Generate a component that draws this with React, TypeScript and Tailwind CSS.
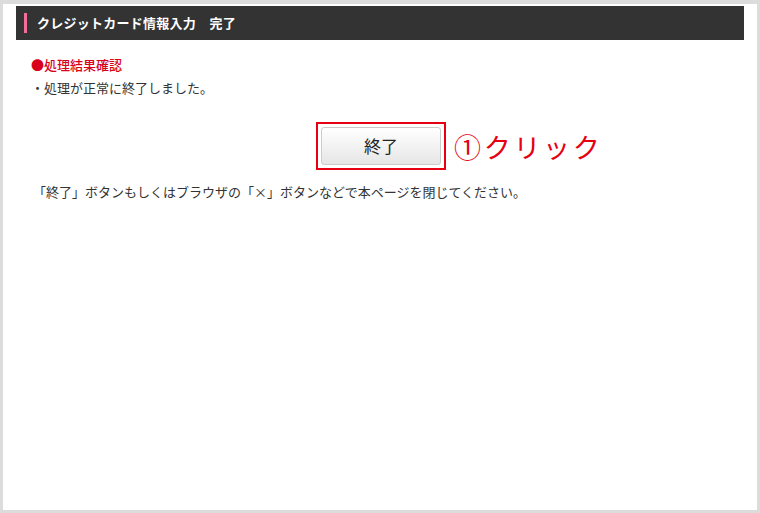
export default function App() {
  return (
    <div
      className="w-[760px] h-[513px] bg-[#dcdcdc] pt-[4px] pl-[3px] pr-[3px] pb-[3px]"
      style={{ fontFamily: '"Noto Sans CJK JP", "Noto Sans", sans-serif' }}
    >
      <div className="h-full bg-white pt-[2px] px-[13px]">
        <div className="h-[34px] bg-[#333333] flex items-center pl-[8px]">
          <div className="w-[3px] h-[20px] bg-[#f36d9d]" />
          <span className="ml-[10px] text-[13px] font-bold text-white tracking-[0.02em]">
            クレジットカード情報入力　完了
          </span>
        </div>

        <div className="pl-[15px] pt-[13px]">
          <p className="text-[13px] leading-[23px] font-medium text-[#d9001b]">●処理結果確認</p>
          <p className="text-[13px] leading-[23px] text-[#333333]">・処理が正常に終了しました。</p>

          <div className="mt-[23px] flex items-center pl-[285px]">
            <div className="border-2 border-[#e60012] p-[3px]">
              <button
                type="button"
                className="w-[120px] h-[38px] rounded-[3px] border border-[#cccccc] bg-gradient-to-b from-white to-[#e6e6e6] text-[17px] text-[#222222]"
              >
                終了
              </button>
            </div>
            <span className="ml-[8px] text-[27px] leading-none text-[#e60012] tracking-[0.1em]">
              ①クリック
            </span>
          </div>

          <p className="mt-[12px] pl-[2px] text-[13px] leading-[20px] text-[#333333]">
            「終了」ボタンもしくはブラウザの「×」ボタンなどで本ページを閉じてください。
          </p>
        </div>
      </div>
    </div>
  )
}
